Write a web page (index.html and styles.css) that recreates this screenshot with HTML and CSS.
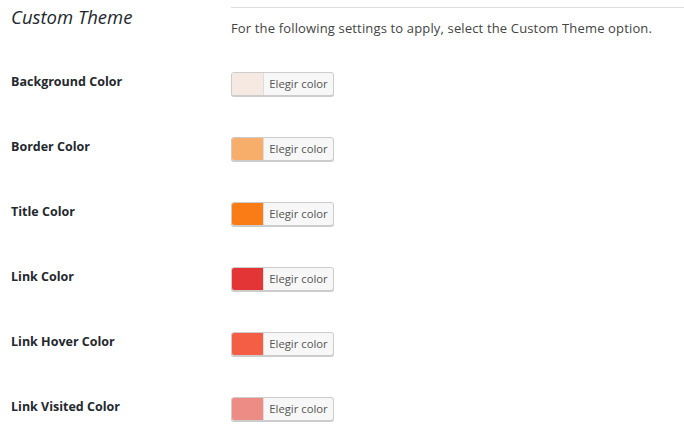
FILE: index.html
```html
<!DOCTYPE html>
<html lang="en">

<head>
    <meta charset="UTF-8">
    <meta name="viewport" content="width=device-width, initial-scale=1.0">
    <title>Custom Theme</title>
    <link rel="stylesheet" href="styles.css">
</head>

<body>

    <div class="section">
        <h2 class="section-title">Custom Theme</h2>
        <div class="section-intro">
            <p>For the following settings to apply, select the Custom Theme option.</p>
        </div>
    </div>

    <div class="settings">
        <div class="row">
            <div class="label">Background Color</div>
            <div class="field">
                <button class="color-button"><span class="swatch swatch-bg"></span><span class="btn-text">Elegir color</span></button>
            </div>
        </div>
        <div class="row">
            <div class="label">Border Color</div>
            <div class="field">
                <button class="color-button"><span class="swatch swatch-border"></span><span class="btn-text">Elegir color</span></button>
            </div>
        </div>
        <div class="row">
            <div class="label">Title Color</div>
            <div class="field">
                <button class="color-button"><span class="swatch swatch-title"></span><span class="btn-text">Elegir color</span></button>
            </div>
        </div>
        <div class="row">
            <div class="label">Link Color</div>
            <div class="field">
                <button class="color-button"><span class="swatch swatch-link"></span><span class="btn-text">Elegir color</span></button>
            </div>
        </div>
        <div class="row">
            <div class="label">Link Hover Color</div>
            <div class="field">
                <button class="color-button"><span class="swatch swatch-hover"></span><span class="btn-text">Elegir color</span></button>
            </div>
        </div>
        <div class="row">
            <div class="label">Link Visited Color</div>
            <div class="field">
                <button class="color-button"><span class="swatch swatch-visited"></span><span class="btn-text">Elegir color</span></button>
            </div>
        </div>
    </div>

</body>

</html>
```

FILE: styles.css
```css
body {
    font-family: 'Open Sans', sans-serif;
    background-color: #ffffff;
    color: #23282d;
    margin: 0;
    padding: 0;
}

.section {
    display: grid;
    grid-template-columns: 231px 1fr;
    height: 60px;
}

.section-title {
    font-size: 18.5px;
    font-style: italic;
    font-weight: 500;
    margin: 0;
    padding: 5px 0 0 11px;
    line-height: 24px;
}

.section-intro {
    border-top: 1px solid #dedede;
    margin-top: 7px;
}

.section-intro p {
    font-size: 13px;
    letter-spacing: 0.15px;
    color: #444;
    margin: 11px 0 0;
    line-height: 18px;
}

.row {
    display: grid;
    grid-template-columns: 231px 1fr;
    height: 65px;
}

.label {
    font-size: 12.5px;
    font-weight: 700;
    padding: 13px 0 0 11px;
    line-height: 18px;
}

.field {
    padding-top: 12px;
}

.color-button {
    display: flex;
    align-items: stretch;
    height: 24px;
    width: 103px;
    padding: 0;
    border: 1px solid #cccccc;
    border-radius: 3px;
    background-color: #f7f7f7;
    box-shadow: 0 1px 0 #cccccc;
    overflow: hidden;
    cursor: pointer;
    font-family: 'Open Sans', sans-serif;
}

.swatch {
    width: 31px;
    border-right: 1px solid #dddddd;
}

.btn-text {
    flex: 1;
    font-size: 11.3px;
    color: #555;
    line-height: 22px;
    text-align: center;
}

.swatch-bg { background-color: #f6e9e2; }
.swatch-border { background-color: #f8ae6b; }
.swatch-title { background-color: #f97c16; }
.swatch-link { background-color: #e33535; }
.swatch-hover { background-color: #f45e45; }
.swatch-visited { background-color: #ed8b85; }
```
